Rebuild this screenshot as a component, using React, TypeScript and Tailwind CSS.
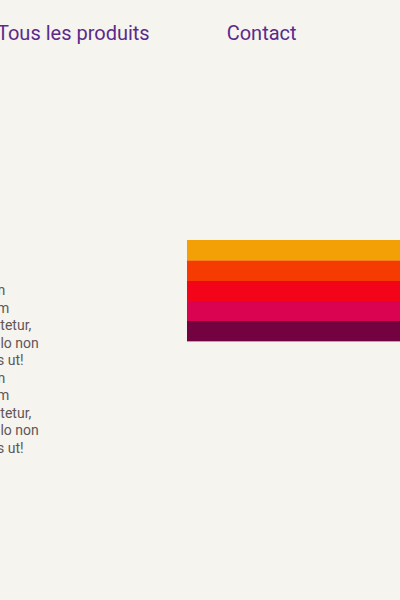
const stripes = [
  "h-[21px] border-b border-[#f57f1c] bg-[#f39f06]",
  "h-5 bg-[#f63b02]",
  "h-5 bg-[#f30419]",
  "h-5 bg-[#da0352]",
  "h-[21px] border-b border-[#c69bb2] bg-[#730340]",
];

const lines = [
  { text: "m", shift: "-ml-[7px]" },
  { text: "m", shift: "-ml-[3px]" },
  { text: "ctetur,", shift: "-ml-[7px]" },
  { text: "llo non", shift: "-ml-[3px]" },
  { text: "s ut!", shift: "-ml-[3px]" },
];

function Paragraph() {
  return (
    <p>
      {lines.map((line, i) => (
        <span key={i} className={`block whitespace-nowrap ${line.shift}`}>
          {line.text}
        </span>
      ))}
    </p>
  );
}

export default function App() {
  return (
    <div className="min-h-screen overflow-hidden bg-[#f5f4ef] font-[Roboto,sans-serif] text-[#5f5458]">
      <nav className="-ml-[3px] flex gap-[77px] pt-5 text-xl leading-[26px] whitespace-nowrap text-[#5b2a8b]">
        <a href="#produits">Tous les produits</a>
        <a href="#contact">Contact</a>
      </nav>
      <main className="flex items-start pt-[194px]">
        <section className="w-[187px] shrink-0 pt-[42px] text-sm leading-tight">
          <Paragraph />
          <Paragraph />
        </section>
        <div className="flex-1">
          {stripes.map((stripe) => (
            <div key={stripe} className={stripe} />
          ))}
        </div>
      </main>
    </div>
  );
}
